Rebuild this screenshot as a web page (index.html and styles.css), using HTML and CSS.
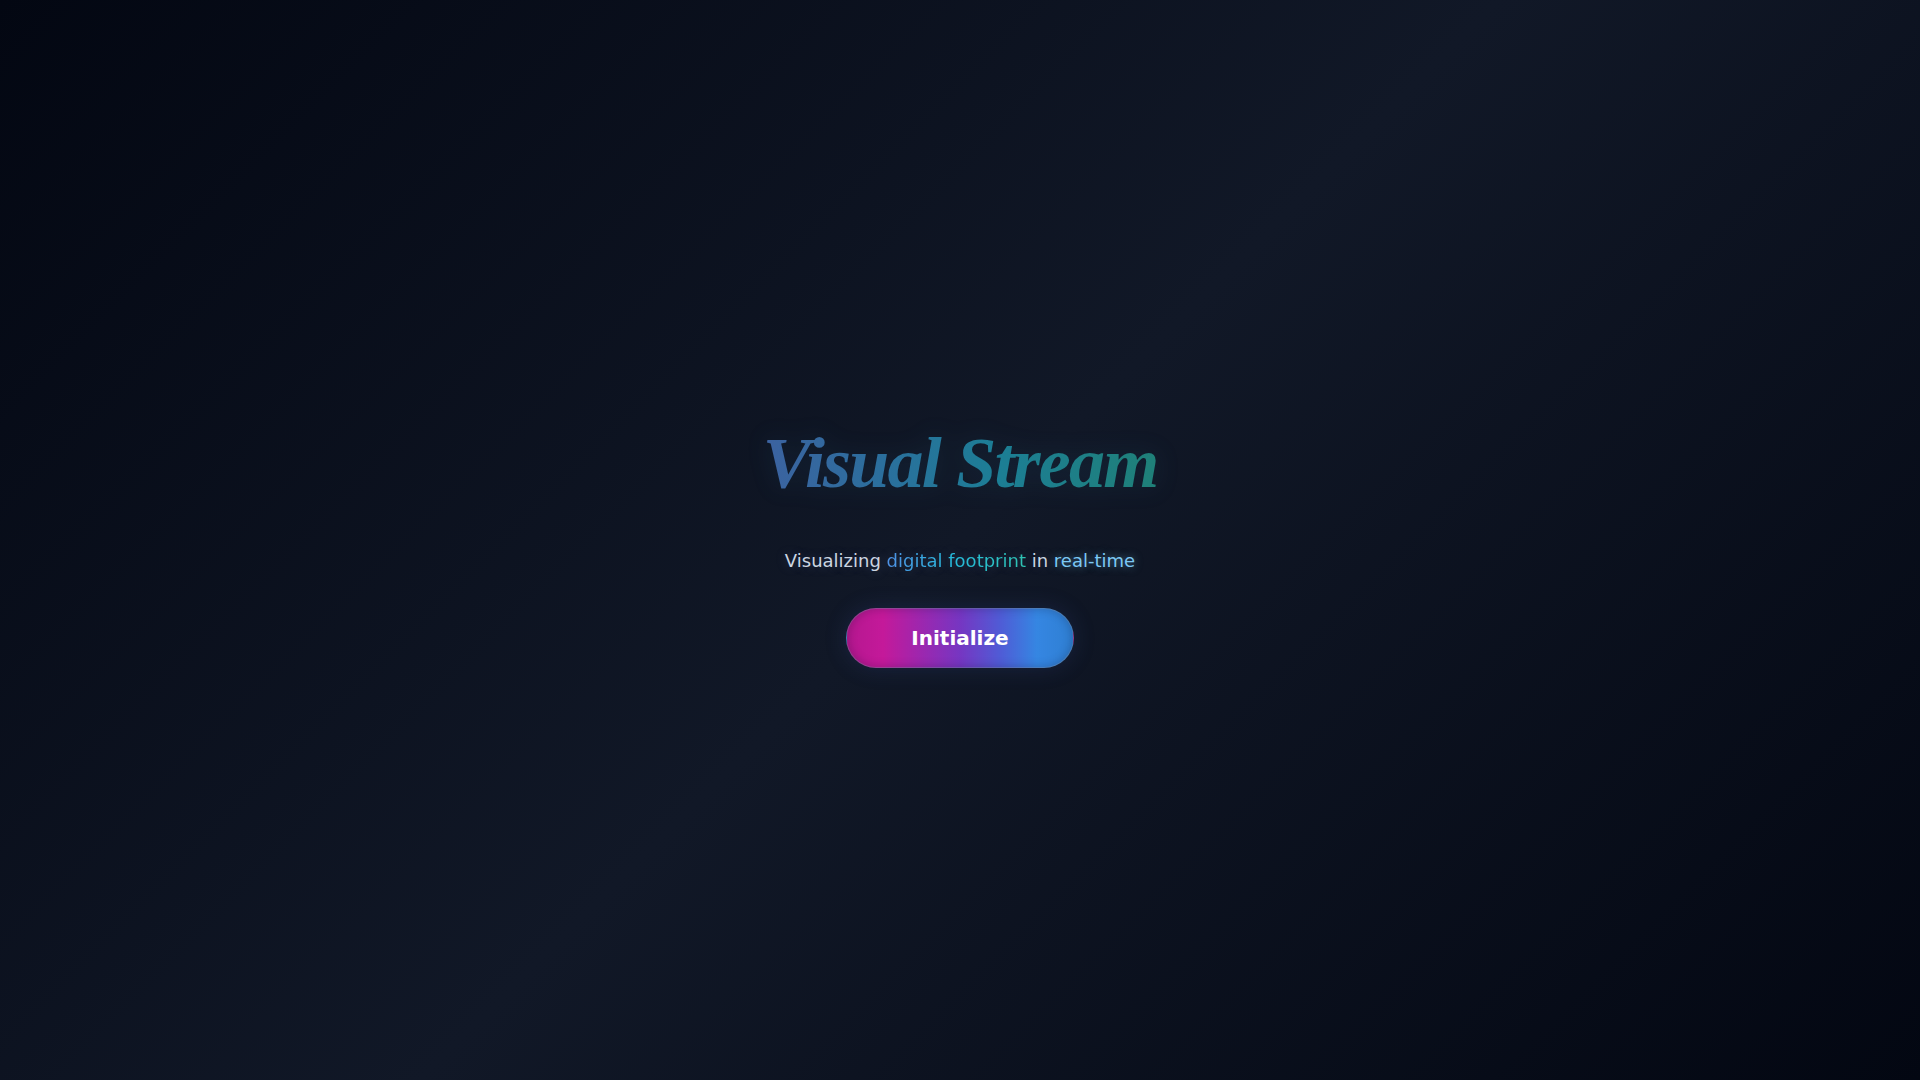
FILE: index.html
```html
<!DOCTYPE html>
<html lang="en">
<head>
<meta charset="utf-8">
<title>Visual Stream</title>
<link rel="stylesheet" href="styles.css">
</head>
<body>
<main class="screen">
  <section class="hero">
    <h1 class="title">Visual Stream</h1>
    <p class="subtitle">Visualizing <span class="accent">digital footprint</span> in <span class="glow">real-time</span></p>
    <button class="init-btn" type="button">Initialize</button>
  </section>
</main>
</body>
</html>
```

FILE: styles.css
```css
* { box-sizing: border-box; }
html, body {
  margin: 0;
  padding: 0;
  width: 100%;
  height: 100%;
}
body {
  background: linear-gradient(135deg, #030712 0%, #111827 50%, #030712 100%);
  font-family: "DejaVu Sans", sans-serif;
  overflow: hidden;
}
.screen {
  width: 100%;
  height: 100vh;
  display: flex;
  align-items: center;
  justify-content: center;
}
.hero {
  display: flex;
  flex-direction: column;
  align-items: center;
  padding-top: 14px;
}
.title {
  margin: 0 0 48px 0;
  font-family: "Liberation Serif", serif;
  font-style: italic;
  font-weight: 700;
  font-size: 72px;
  line-height: 72px;
  letter-spacing: -0.025em;
  background: linear-gradient(90deg, #3c62a0 0%, #2b6f9d 30%, #1c7e95 60%, #1f8078 100%);
  -webkit-background-clip: text;
  background-clip: text;
  color: transparent;
  filter: drop-shadow(0 0 12px rgba(40, 120, 170, 0.15));
}
.subtitle {
  margin: 0 0 33px 0;
  font-size: 18px;
  line-height: 28px;
  color: #cbd5e1;
  text-shadow: 0 0 12px rgba(148, 163, 220, 0.25);
}
.accent {
  background: linear-gradient(90deg, #4d92e8 0%, #22bfdc 50%, #2cc6b2 100%);
  -webkit-background-clip: text;
  background-clip: text;
  color: transparent;
}
.glow {
  color: #7cc8f4;
  text-shadow: 0 0 8px rgba(125, 211, 252, 0.5);
}
.init-btn {
  font-family: "DejaVu Sans", sans-serif;
  font-weight: 700;
  font-size: 20px;
  line-height: 28px;
  color: #ffffff;
  padding: 15px 64px;
  border: 1px solid rgba(100, 116, 139, 0.45);
  border-radius: 9999px;
  background: linear-gradient(90deg, #b5178f 0%, #c4199a 16%, #9a28b0 34%, #7636c2 50%, #4f5cd6 68%, #3586e2 84%, #2f7fd2 100%);
  box-shadow: 0 0 22px rgba(60, 80, 160, 0.22), inset 0 0 10px rgba(10, 10, 40, 0.25);
  cursor: pointer;
}
```
